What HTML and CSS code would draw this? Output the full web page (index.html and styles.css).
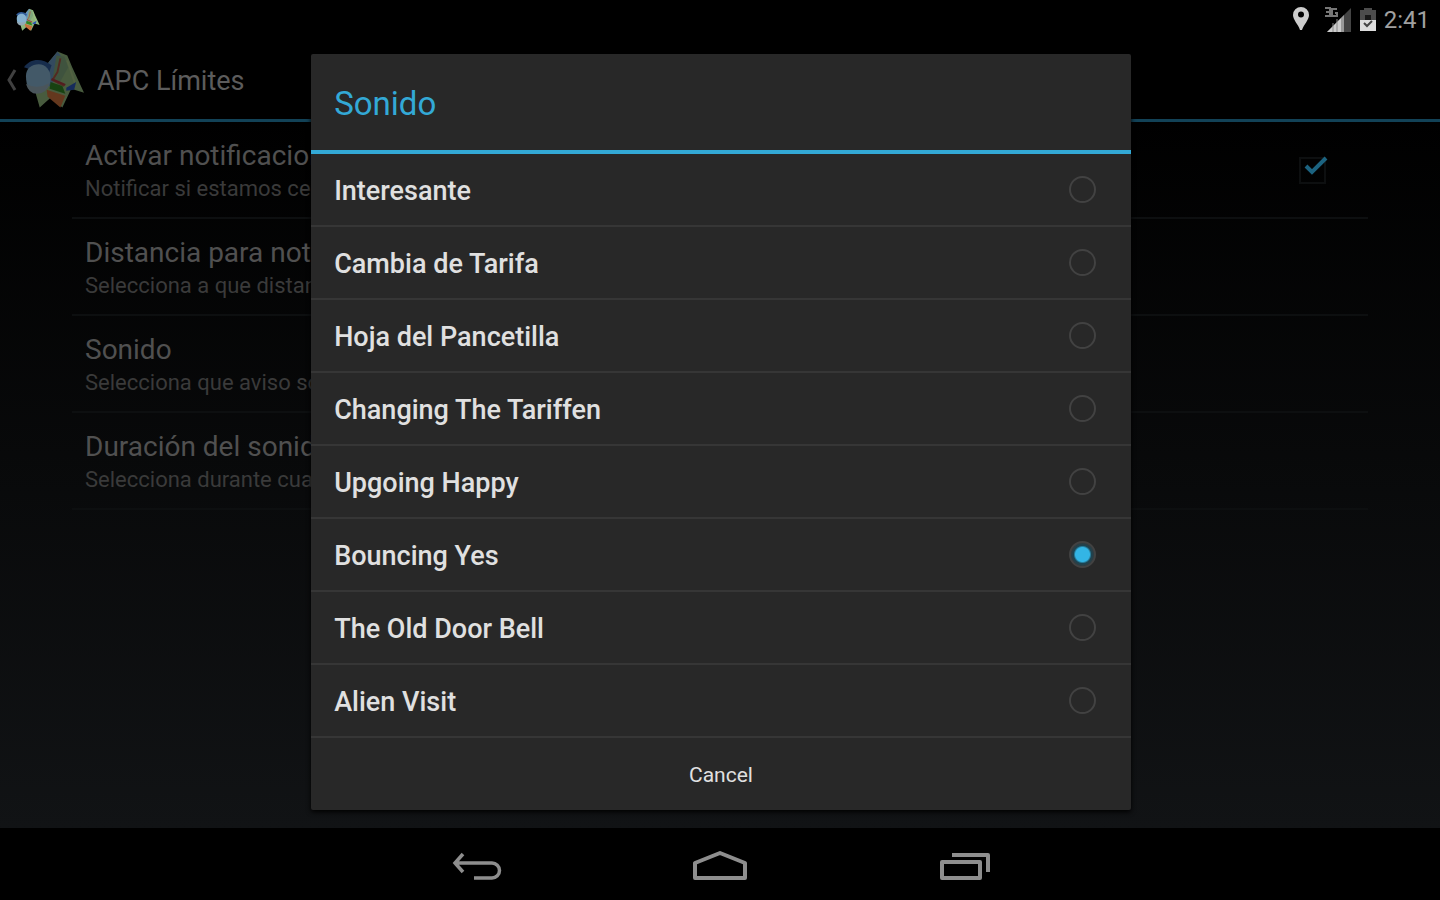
FILE: index.html
```html
<!DOCTYPE html>
<html lang="es">
<head>
<meta charset="utf-8">
<title>APC Límites</title>
<link rel="stylesheet" href="styles.css">
</head>
<body>
<svg class="defs" aria-hidden="true">
  <symbol id="app-icon" viewBox="0 0 62 60">
    <path d="M25 12 34 1l10 4 5 12 12 26-13-4-9 19-12-10-11 10-4-14z" fill="#8fb57c"/>
    <path d="M25 12 34 1l4 5-5 15-5 16-10-4z" fill="#6793bc"/>
    <path d="M33 5l8 1 4 11-10 18-6-6z" fill="#7fa67c"/>
    <path d="M37 8 34 22l-5 8 12 6" fill="none" stroke="#a65342" stroke-width="2"/>
    <path d="M44 10l8 24" fill="none" stroke="#a3c283" stroke-width="2"/>
    <path d="M27 32l12 4 3 8-16-5z" fill="#2f8422"/>
    <path d="M28 29l14 6" stroke="#a6393f" stroke-width="2"/>
    <path d="M43 38l10-6-2 8-8 1z" fill="#2d57b5"/>
    <path d="M23 40l19 6-5 12-13-11z" fill="#c8703c"/>
    <path d="M0 17C6 8 18 7 28 15l-3 9-19-5z" fill="#2f5a98"/>
    <path d="M2 26c0-8 6-12 13-12s12 6 12 14-5 15-13 15S2 37 2 26z" fill="#86b2d0"/>
    <path d="M2 34q12 6 24-1-3 11-13 11Q5 44 2 34z" fill="#94a9b6"/>
  </symbol>
</svg>

<header class="status">
  <svg class="status-app" viewBox="0 0 62 60" aria-hidden="true"><use href="#app-icon"/></svg>
  <div class="status-right">
    <svg width="18" height="26" viewBox="0 0 18 26" aria-hidden="true">
      <path fill="#ccc" fill-rule="evenodd" d="M9 0a8 8 0 0 1 8 8c0 5-5 9-7 15H8C6 17 1 13 1 8a8 8 0 0 1 8-8zm0 4.500a3 3 0 1 0 0 6 3 3 0 0 0 0-6z"/>
    </svg>
    <svg class="signal" width="28" height="26" viewBox="0 0 28 26" aria-hidden="true">
      <path d="M27 1v24H3z" fill="#444"/>
      <path d="M17 11v14H3z" fill="#ccc"/>
      <path d="M9 16v9M13 12v13" stroke="#888" stroke-width="1"/>
      <path d="M17 11v14h3V8z" fill="#999"/>
      <path d="M1 1h5v8H1M2 5h4M13 2H8v7h5V6h-2" fill="none" stroke="#777" stroke-width="2"/>
    </svg>
    <svg width="16" height="24" viewBox="0 0 16 24" aria-hidden="true">
      <path d="M4 0h8v2h4v11H0V2h4z" fill="#4c4c4c"/>
      <path d="M0 12h16v11H0z" fill="#ddd"/>
      <path d="M5 7h6v5H5z" fill="#181818"/>
      <path d="M4 15l3 3 5-5" fill="none" stroke="#444" stroke-width="2"/>
    </svg>
    <time>2:41</time>
  </div>
</header>

<main class="stage">
  <div class="screen">
    <div class="action-bar">
      <button class="up" type="button" aria-label="Atrás">
        <svg width="12" height="24" viewBox="0 0 12 24" aria-hidden="true"><path d="M9 2 3 12l6 10" fill="none" stroke="#404040" stroke-width="3"/></svg>
        <svg class="up-app" viewBox="0 0 62 60" aria-hidden="true"><use href="#app-icon"/></svg>
      </button>
      <h1>APC Límites</h1>
    </div>
    <ul class="prefs">
      <li>
        <label class="pref" for="notify">
          <span class="pref-title">Activar notificaciones</span><span class="pref-sub">Notificar si estamos cerca</span>
        </label>
        <span class="check">
          <input id="notify" type="checkbox" checked>
          <svg width="32" height="28" viewBox="0 0 32 28" aria-hidden="true"><path d="M7 12l6 6L27 4" fill="none" stroke="#1c6380" stroke-width="4"/></svg>
        </span>
      </li>
      <li><div class="pref"><span class="pref-title">Distancia para notificar</span><span class="pref-sub">Selecciona a que distancia</span></div></li>
      <li><div class="pref"><span class="pref-title">Sonido</span><span class="pref-sub">Selecciona que aviso sonará</span></div></li>
      <li><div class="pref"><span class="pref-title">Duración del sonido</span><span class="pref-sub">Selecciona durante cuanto</span></div></li>
    </ul>
  </div>

  <div class="overlay">
    <form class="dialog" role="dialog" aria-labelledby="dialog-title">
      <h2 id="dialog-title">Sonido</h2>
      <div class="options">
        <label><span>Interesante</span><input type="radio" name="sound"></label>
        <label><span>Cambia de Tarifa</span><input type="radio" name="sound"></label>
        <label><span>Hoja del Pancetilla</span><input type="radio" name="sound"></label>
        <label><span>Changing The Tariffen</span><input type="radio" name="sound"></label>
        <label><span>Upgoing Happy</span><input type="radio" name="sound"></label>
        <label><span>Bouncing Yes</span><input type="radio" name="sound" checked></label>
        <label><span>The Old Door Bell</span><input type="radio" name="sound"></label>
        <label><span>Alien Visit</span><input type="radio" name="sound"></label>
      </div>
      <button class="cancel" type="button">Cancel</button>
    </form>
  </div>
</main>

<nav class="nav">
  <button type="button" aria-label="Back">
    <svg width="56" height="32" viewBox="0 0 56 32" aria-hidden="true"><path d="M14 3 6 12l8 9M6 12h37a7.500 7.500 0 0 1 0 15H25" fill="none" stroke="#8e8e8e" stroke-width="3.500"/></svg>
  </button>
  <button type="button" aria-label="Home">
    <svg width="56" height="32" viewBox="0 0 56 32" aria-hidden="true"><path d="M3 27V12L28 2l25 10v15z" fill="none" stroke="#8e8e8e" stroke-width="4" stroke-linejoin="round"/></svg>
  </button>
  <button type="button" aria-label="Recent apps">
    <svg width="56" height="32" viewBox="0 0 56 32" aria-hidden="true"><path d="M7 11h38v16H7zM17 4h36v17" fill="none" stroke="#8e8e8e" stroke-width="4" stroke-linejoin="round"/></svg>
  </button>
</nav>
</body>
</html>
```
FILE: styles.css
```css
* {
  box-sizing: border-box;
}

body {
  margin: 0;
  min-height: 100vh;
  display: flex;
  flex-direction: column;
  background: #000;
  color: #e0e0e0;
  font-family: Roboto, "Noto Sans", sans-serif;
}

button {
  border: 0;
  padding: 0;
  background: none;
  color: inherit;
  font-family: inherit;
}

svg {
  display: block;
  flex: none;
}

.defs {
  position: absolute;
  width: 0;
  height: 0;
}

.status {
  height: 40px;
  padding: 0 10px 0 16px;
  display: flex;
  align-items: center;
  justify-content: space-between;
}

.status-app {
  width: 24px;
  height: 24px;
}

.status-right {
  display: flex;
  align-items: center;
  gap: 8px;
}

.signal {
  margin-left: 6px;
}

.status time {
  color: #a0a0a0;
  font-size: 24px;
  line-height: 40px;
}

.stage {
  position: relative;
  flex: 1;
  display: flex;
  flex-direction: column;
}

.screen {
  flex: 1;
  background: linear-gradient(#000 10%, #111315);
}

.action-bar {
  min-height: 82px;
  padding-left: 6px;
  display: flex;
  align-items: center;
  gap: 12px;
  background: #000;
  border-bottom: 3px solid #124257;
}

.up {
  display: flex;
  align-items: center;
  gap: 6px;
}

.up-app {
  width: 61px;
  height: 60px;
  opacity: 0.5;
}

h1 {
  margin: 0;
  padding-top: 2px;
  color: #5c5c5c;
  font-size: 27px;
  line-height: 36px;
  font-weight: 400;
}

.prefs {
  margin: 0 72px;
  padding: 0;
  list-style: none;
}

.prefs li {
  min-height: 97px;
  padding: 2px 42px 0 13px;
  display: flex;
  align-items: center;
  justify-content: space-between;
  border-bottom: 2px solid #0d0f10;
}

.pref-title,
.pref-sub {
  display: block;
}

.pref-title {
  color: #505050;
  font-size: 28px;
  line-height: 36px;
}

.pref-sub {
  color: #3a3a3a;
  font-size: 22px;
  line-height: 30px;
}

.check {
  position: relative;
}

.check input {
  appearance: none;
  display: block;
  width: 27px;
  height: 27px;
  margin: 0;
  border: 2px solid #0d0f10;
}

.check svg {
  position: absolute;
  left: 0;
  top: -3px;
  pointer-events: none;
}

.overlay {
  position: absolute;
  inset: 0;
  padding: 14px 0 18px 2px;
  display: flex;
  align-items: center;
  justify-content: center;
}

.dialog {
  width: 57%;
  background: #282828;
  border-radius: 2px;
  box-shadow: 0 2px 5px #000;
}

.dialog h2 {
  margin: 0;
  padding: 26px 23px 22px;
  border-bottom: 4px solid #33a9d6;
  color: #33a9d6;
  font-size: 33px;
  line-height: 48px;
  font-weight: 400;
}

.options label {
  min-height: 73px;
  padding: 0 35px 0 23px;
  display: flex;
  align-items: center;
  justify-content: space-between;
  border-bottom: 2px solid #363636;
  font-size: 27px;
  line-height: 36px;
  font-weight: 500;
}

.options span {
  padding-top: 2px;
}

.options input {
  appearance: none;
  width: 27px;
  height: 27px;
  margin: 0;
  border: 2px solid #424242;
  border-radius: 50%;
}

.options input:checked {
  background: radial-gradient(circle, #33b5e5 0 7px, #1d4350 9px, #343b3e 12px);
}

.cancel {
  width: 100%;
  min-height: 72px;
  padding-top: 2px;
  display: block;
  font-size: 21px;
  line-height: 30px;
}

.nav {
  min-height: 72px;
  padding-top: 5px;
  display: grid;
  grid-template-columns: repeat(3, 243px);
  justify-content: center;
}

.nav button {
  display: flex;
  align-items: center;
  justify-content: center;
}
```
